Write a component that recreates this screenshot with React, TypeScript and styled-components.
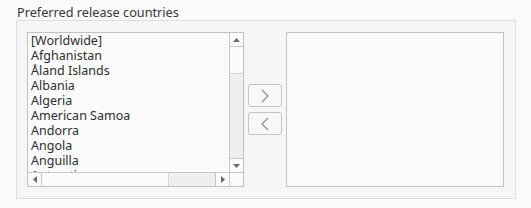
import React from "react";
import styled, { createGlobalStyle } from "styled-components";

const Global = createGlobalStyle`
  html, body { margin: 0; padding: 0; background: #fafafa; }
  body { font-family: "Noto Sans", "DejaVu Sans", sans-serif; font-size: 13px; color: #3c3c3c; }
`;

const Page = styled.div`
  width: 531px;
  height: 208px;
  box-sizing: border-box;
  padding: 0 16px 0 16px;
`;

const Title = styled.div`
  height: 20px;
  line-height: 20px;
  padding-left: 1px;
  font-size: 12.7px;
  margin-top: 2px;
  margin-bottom: -2px;
  color: #363636;
`;

const Group = styled.div`
  box-sizing: border-box;
  width: 500px;
  height: 179px;
  border: 1px solid #dedede;
  background: #f6f6f6;
  padding: 11px 11px 0 10px;
  display: flex;
  gap: 4px;
`;

const ListFrame = styled.div<{ $w: number }>`
  box-sizing: border-box;
  width: ${(p) => p.$w}px;
  height: 155px;
  border: 1px solid #c2c2c2;
  background: #fafafa;
  display: grid;
  grid-template-columns: 1fr 14px;
  grid-template-rows: 1fr 14px;
  overflow: hidden;
`;

const EmptyFrame = styled.div`
  box-sizing: border-box;
  width: 218px;
  height: 155px;
  border: 1px solid #c2c2c2;
  background: #fafafa;
`;

const Items = styled.div`
  overflow: hidden;
  padding: 0 0 0 3px;
`;

const Item = styled.div`
  height: 15px;
  line-height: 15px;
  font-size: 12.5px;
  white-space: nowrap;
  color: #2e2e2e;
`;

const VScroll = styled.div`
  display: flex;
  flex-direction: column;
  background: #efefef;
  border-left: 1px solid #c8c8c8;
`;

const HScroll = styled.div`
  display: flex;
  background: #efefef;
  border-top: 1px solid #c8c8c8;
`;

const ArrowBtn = styled.div<{ $dir: "up" | "down" | "left" | "right" }>`
  box-sizing: border-box;
  width: ${(p) => (p.$dir === "up" || p.$dir === "down" ? "13px" : "14px")};
  height: ${(p) => (p.$dir === "up" || p.$dir === "down" ? "14px" : "13px")};
  background: #fbfbfb;
  display: flex;
  align-items: center;
  justify-content: center;
  border-bottom: ${(p) => (p.$dir === "up" ? "1px solid #c8c8c8" : "none")};
  border-top: ${(p) => (p.$dir === "down" ? "1px solid #c8c8c8" : "none")};
  border-right: ${(p) => (p.$dir === "left" ? "1px solid #c8c8c8" : "none")};
  border-left: ${(p) => (p.$dir === "right" ? "1px solid #c8c8c8" : "none")};
  flex: none;
`;

const VThumb = styled.div`
  height: 26px;
  background: #fbfbfb;
  border-bottom: 1px solid #d8d8d8;
  flex: none;
`;

const HThumb = styled.div`
  width: 126px;
  background: #fbfbfb;
  border-right: 1px solid #d8d8d8;
  flex: none;
`;

const Spacer = styled.div`
  flex: 1;
`;

const Corner = styled.div`
  background: #fafafa;
  border-left: 1px solid #c8c8c8;
  border-top: 1px solid #c8c8c8;
`;

const ButtonCol = styled.div`
  width: 34px;
  height: 155px;
  display: flex;
  flex-direction: column;
  justify-content: center;
  gap: 5px;
`;

const MoveButton = styled.button`
  box-sizing: border-box;
  width: 34px;
  height: 23px;
  border: 1px solid #c4c4c4;
  border-radius: 3px;
  background: #f8f8f8;
  padding: 0;
  display: flex;
  align-items: center;
  justify-content: center;
`;

const Tri = ({ dir }: { dir: "up" | "down" | "left" | "right" }) => {
  const pts = {
    up: "0,4 7,4 3.5,0",
    down: "0,0 7,0 3.5,4",
    left: "4,0 4,7 0,3.5",
    right: "0,0 0,7 4,3.5",
  }[dir];
  const vert = dir === "up" || dir === "down";
  return (
    <svg width={vert ? 7 : 4} height={vert ? 4 : 7} viewBox={vert ? "0 0 7 4" : "0 0 4 7"}>
      <polygon points={pts} fill="#6a6a6a" />
    </svg>
  );
};

const Chevron = ({ dir }: { dir: "left" | "right" }) => (
  <svg width="10" height="14" viewBox="0 0 10 14">
    <path
      d={dir === "right" ? "M2 1 L8 7 L2 13" : "M8 1 L2 7 L8 13"}
      fill="none"
      stroke="#8a8a8a"
      strokeWidth="1.1"
    />
  </svg>
);

const countries = [
  "[Worldwide]",
  "Afghanistan",
  "Åland Islands",
  "Albania",
  "Algeria",
  "American Samoa",
  "Andorra",
  "Angola",
  "Anguilla",
  "Antarctica",
];

export default function App() {
  return (
    <Page>
      <Global />
      <Title>Preferred release countries</Title>
      <Group>
        <ListFrame $w={217}>
          <Items>
            {countries.map((c) => (
              <Item key={c}>{c}</Item>
            ))}
          </Items>
          <VScroll>
            <ArrowBtn $dir="up">
              <Tri dir="up" />
            </ArrowBtn>
            <VThumb />
            <Spacer />
            <ArrowBtn $dir="down">
              <Tri dir="down" />
            </ArrowBtn>
          </VScroll>
          <HScroll>
            <ArrowBtn $dir="left">
              <Tri dir="left" />
            </ArrowBtn>
            <HThumb />
            <Spacer />
            <ArrowBtn $dir="right">
              <Tri dir="right" />
            </ArrowBtn>
          </HScroll>
          <Corner />
        </ListFrame>
        <ButtonCol>
          <MoveButton>
            <Chevron dir="right" />
          </MoveButton>
          <MoveButton>
            <Chevron dir="left" />
          </MoveButton>
        </ButtonCol>
        <EmptyFrame />
      </Group>
    </Page>
  );
}
